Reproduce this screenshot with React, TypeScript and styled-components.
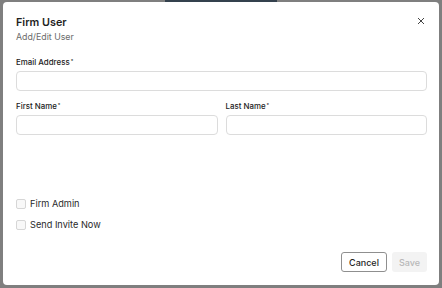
import styled, { createGlobalStyle } from "styled-components";

const GlobalStyle = createGlobalStyle`
  html, body {
    margin: 0;
    padding: 0;
    width: 100%;
    height: 100%;
    overflow: hidden;
    background: #ffffff;
    font-family: "Inter", "Liberation Sans", sans-serif;
  }
`;

const Page = styled.div`
  width: 442px;
  height: 288px;
`;

const TabUnderline = styled.div`
  margin-left: 165px;
  width: 112px;
  height: 2px;
  background: #68839b;
`;

const Backdrop = styled.div`
  position: fixed;
  inset: 0;
  background: rgba(0, 0, 0, 0.5);
  display: flex;
  align-items: flex-start;
  justify-content: flex-start;
  padding: 2px 3px 0 3px;
`;

const Modal = styled.div`
  position: relative;
  width: 436px;
  height: 283px;
  box-sizing: border-box;
  background: #ffffff;
  border-radius: 4px;
  padding: 14px 12px 0 13px;
  display: flex;
  flex-direction: column;
`;

const Title = styled.h2`
  margin: 0;
  font-size: 10.8px;
  line-height: 14px;
  font-weight: 600;
  color: #1f1f1f;
`;

const Subtitle = styled.p`
  margin: 1px 0 0;
  font-size: 8.8px;
  line-height: 12px;
  color: #6b6b6b;
`;

const CloseButton = styled.button`
  position: absolute;
  top: 12px;
  right: 11px;
  width: 14px;
  height: 14px;
  padding: 0;
  border: none;
  background: transparent;
  display: flex;
  align-items: center;
  justify-content: center;
  cursor: pointer;
`;

const Field = styled.div<{ $top: number }>`
  margin-top: ${(p) => p.$top}px;
  display: flex;
  flex-direction: column;
  gap: 3px;
`;

const Row = styled.div`
  display: flex;
  gap: 8px;

  & > ${Field} {
    flex: 1;
  }
`;

const Label = styled.label`
  font-size: 7.9px;
  line-height: 11px;
  font-weight: 500;
  color: #222222;
`;

const Req = styled.sup`
  font-size: 5px;
  vertical-align: top;
  margin-left: 1px;
  position: relative;
  top: -1px;
`;

const Input = styled.input`
  height: 20px;
  box-sizing: border-box;
  border: 1px solid #dcdcdc;
  border-radius: 4px;
  padding: 0 8px;
  font-family: inherit;
  font-size: 9px;
  outline: none;
`;

const Checks = styled.div`
  margin-top: 62px;
  display: flex;
  flex-direction: column;
  gap: 7px;
`;

const CheckRow = styled.label`
  display: flex;
  align-items: center;
  gap: 4px;
  font-size: 9.2px;
  line-height: 14px;
  color: #2a2a2a;
`;

const Box = styled.span`
  width: 10px;
  height: 10px;
  box-sizing: border-box;
  border: 1px solid #d6d6d6;
  border-radius: 2px;
  background: #f8f8f8;
`;

const Footer = styled.div`
  margin-top: auto;
  margin-bottom: 13px;
  display: flex;
  justify-content: flex-end;
  gap: 5px;
`;

const Button = styled.button<{ $disabled?: boolean }>`
  height: 20px;
  box-sizing: border-box;
  padding: 0 7px;
  border-radius: 3px;
  font-family: inherit;
  font-size: 9px;
  font-weight: 500;
  border: ${(p) => (p.$disabled ? "none" : "1px solid #8f8f8f")};
  background: ${(p) => (p.$disabled ? "#f3f3f3" : "#ffffff")};
  color: ${(p) => (p.$disabled ? "#b8b8b8" : "#1f1f1f")};
`;

const App = (): JSX.Element => {
  return (
    <>
      <GlobalStyle />
      <Page>
        <TabUnderline />
      </Page>
      <Backdrop>
        <Modal>
          <Title>Firm User</Title>
          <Subtitle>Add/Edit User</Subtitle>
          <CloseButton aria-label="Close">
            <svg width="8" height="8" viewBox="0 0 8 8">
              <path d="M1 1L7 7M7 1L1 7" stroke="#444" strokeWidth="1" />
            </svg>
          </CloseButton>

          <Field $top={14}>
            <Label>
              Email Address<Req>*</Req>
            </Label>
            <Input />
          </Field>

          <Row>
            <Field $top={10}>
              <Label>
                First Name<Req>*</Req>
              </Label>
              <Input />
            </Field>
            <Field $top={10}>
              <Label>
                Last Name<Req>*</Req>
              </Label>
              <Input />
            </Field>
          </Row>

          <Checks>
            <CheckRow>
              <Box />
              Firm Admin
            </CheckRow>
            <CheckRow>
              <Box />
              Send Invite Now
            </CheckRow>
          </Checks>

          <Footer>
            <Button>Cancel</Button>
            <Button $disabled>Save</Button>
          </Footer>
        </Modal>
      </Backdrop>
    </>
  );
};

export default App;
